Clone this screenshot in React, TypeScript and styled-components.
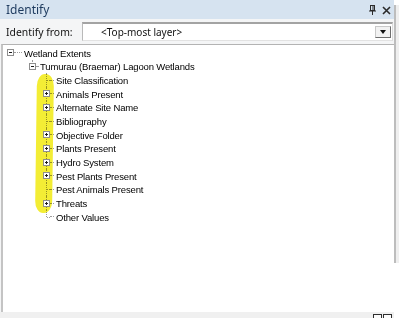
import styled, { createGlobalStyle } from "styled-components";

const GlobalStyle = createGlobalStyle`
  html, body {
    margin: 0;
    padding: 0;
  }
  body {
    width: 399px;
    height: 318px;
    overflow: hidden;
    background: #ffffff;
    font-family: "Noto Sans", "Liberation Sans", sans-serif;
  }
`;

type Child = { label: string; expandable: boolean };

const children: Child[] = [
  { label: "Site Classification", expandable: false },
  { label: "Animals Present", expandable: true },
  { label: "Alternate Site Name", expandable: true },
  { label: "Bibliography", expandable: false },
  { label: "Objective Folder", expandable: true },
  { label: "Plants Present", expandable: true },
  { label: "Hydro System", expandable: true },
  { label: "Pest Plants Present", expandable: true },
  { label: "Pest Animals Present", expandable: false },
  { label: "Threats", expandable: true },
  { label: "Other Values", expandable: false },
];

const App = () => {
  return (
    <>
      <GlobalStyle />
      <Frame>
        <Window>
          <TitleBar>
            <Title>Identify</Title>
            <TitleButtons>
              <svg width="7" height="10" viewBox="0 0 7 10">
                <rect x="1.5" y="0.5" width="4" height="5" fill="none" stroke="#2b2b2b" />
                <line x1="4" y1="1" x2="4" y2="5" stroke="#2b2b2b" />
                <line x1="0" y1="6" x2="7" y2="6" stroke="#2b2b2b" />
                <line x1="3.5" y1="6" x2="3.5" y2="10" stroke="#2b2b2b" />
              </svg>
              <svg width="9" height="9" viewBox="0 0 9 9">
                <path d="M1 1 L8 8 M8 1 L1 8" stroke="#2b2b2b" strokeWidth="1.6" />
              </svg>
            </TitleButtons>
          </TitleBar>
          <FromRow>
            <FromLabel>Identify from:</FromLabel>
            <Dropdown>
              <DropdownText>&lt;Top-most layer&gt;</DropdownText>
              <ArrowButton>
                <Arrow />
              </ArrowButton>
            </Dropdown>
          </FromRow>
          <TreePanel>
            <Row $indent={4}>
              <Node $up={false} $down={false}>
                <Box $open />
              </Node>
              <Dash $w={8} />
              <Label>Wetland Extents</Label>
            </Row>
            <Row $indent={26}>
              <Node $up $down={false}>
                <Box $open />
              </Node>
              <Dash $w={2} />
              <Label>Tumurau (Braemar) Lagoon Wetlands</Label>
            </Row>
            {children.map((c, i) => (
              <Row key={c.label} $indent={40}>
                <Node $up $down={i < children.length - 1}>
                  {c.expandable && <Box $open={false} />}
                </Node>
                <Dash $w={4} />
                <Label>{c.label}</Label>
              </Row>
            ))}
            <Marker />
          </TreePanel>
          <StatusStrip>
            <MiniButton />
            <MiniButton />
          </StatusStrip>
        </Window>
        <SideEdge>
          <SideBar />
        </SideEdge>
      </Frame>
    </>
  );
};

export default App;

const Frame = styled.div`
  display: flex;
  width: 399px;
  height: 318px;
`;

const Window = styled.div`
  flex: 1;
  min-width: 0;
  display: flex;
  flex-direction: column;
  background: #f4f5f6;
`;

const TitleBar = styled.div`
  height: 19px;
  flex: none;
  display: flex;
  align-items: center;
  justify-content: space-between;
  padding: 0 3px 0 6px;
  background: #d6e3f0;
`;

const Title = styled.div`
  font-size: 12px;
  color: #1d3a5e;
`;

const TitleButtons = styled.div`
  display: flex;
  align-items: center;
  gap: 6px;
  padding-top: 1px;
`;

const FromRow = styled.div`
  height: 25px;
  flex: none;
  display: flex;
  align-items: center;
  padding: 0 1px 0 6px;
`;

const FromLabel = styled.div`
  width: 76px;
  font-size: 10.4px;
  color: #111;
`;

const Dropdown = styled.div`
  flex: 1;
  height: 16px;
  display: flex;
  align-items: center;
  justify-content: space-between;
  background: #ffffff;
  border-top: 2px solid #a3a3a3;
  border-left: 1px solid #b9b9b9;
  border-right: 1px solid #dcdcdc;
  border-bottom: 1px solid #e2e2e2;
`;

const DropdownText = styled.div`
  padding-left: 18px;
  font-size: 10px;
  color: #111;
`;

const ArrowButton = styled.div`
  width: 14px;
  height: 10px;
  margin-right: 1px;
  display: flex;
  align-items: center;
  justify-content: center;
  background: #f2f2f2;
  border: 1px solid #c8c8c8;
  border-right-color: #6e6e6e;
  border-bottom-color: #6e6e6e;
`;

const Arrow = styled.div`
  width: 0;
  height: 0;
  border-left: 3.5px solid transparent;
  border-right: 3.5px solid transparent;
  border-top: 4px solid #111;
`;

const TreePanel = styled.div`
  position: relative;
  flex: 1;
  margin-left: 1px;
  padding-top: 1px;
  background: #ffffff;
  border-top: 1px solid #b3b3b3;
  border-left: 2px solid #c4c4c4;
  overflow: hidden;
`;

const Row = styled.div<{ $indent: number }>`
  height: 13.67px;
  display: flex;
  align-items: center;
  padding-left: ${(p) => p.$indent}px;
  white-space: nowrap;
`;

const Node = styled.span<{ $up: boolean; $down: boolean }>`
  position: relative;
  flex: none;
  width: 7px;
  height: 100%;
  display: flex;
  align-items: center;

  &::before {
    content: "";
    display: ${(p) => (p.$up || p.$down ? "block" : "none")};
    position: absolute;
    left: 3px;
    top: ${(p) => (p.$up ? "0" : "50%")};
    bottom: ${(p) => (p.$down ? "0" : "50%")};
    border-left: 1px dotted #9c9c9c;
  }

  &::after {
    content: "";
    position: absolute;
    left: 4px;
    right: 0;
    top: 50%;
    border-top: 1px dotted #9c9c9c;
  }
`;

const Box = styled.span<{ $open: boolean }>`
  position: relative;
  z-index: 1;
  box-sizing: border-box;
  width: 7px;
  height: 7px;
  background: #ffffff;
  border: 1px solid #8e8e8e;

  &::before {
    content: "";
    position: absolute;
    left: 1px;
    top: 2px;
    width: 3px;
    height: 1px;
    background: #1c1c1c;
  }

  &::after {
    content: "";
    display: ${(p) => (p.$open ? "none" : "block")};
    position: absolute;
    left: 2px;
    top: 1px;
    width: 1px;
    height: 3px;
    background: #1c1c1c;
  }
`;

const Dash = styled.span<{ $w: number }>`
  flex: none;
  width: ${(p) => p.$w}px;
  margin-right: 2px;
  border-top: 1px dotted #9c9c9c;
`;

const Label = styled.span`
  font-family: "Liberation Sans", Arial, sans-serif;
  font-size: 9.5px;
  letter-spacing: -0.15px;
  color: #000;
  line-height: 13px;
  padding-top: 1px;
`;

const Marker = styled.div`
  position: absolute;
  left: 33px;
  top: 29px;
  width: 17px;
  height: 139px;
  border-radius: 8px / 12px;
  background: #f3ec2a;
  mix-blend-mode: multiply;
  transform: rotate(0.8deg);
  opacity: 0.95;
`;

const StatusStrip = styled.div`
  height: 6px;
  flex: none;
  display: flex;
  justify-content: flex-end;
  gap: 1px;
  padding: 2px 2px 0 0;
  box-sizing: border-box;
  overflow: hidden;
  background: #f0f0f0;
`;

const MiniButton = styled.div`
  box-sizing: border-box;
  width: 9px;
  height: 9px;
  background: #fbfbfb;
  border: 1px solid #2e2e2e;
`;

const SideEdge = styled.div`
  flex: none;
  width: 5px;
  padding-top: 5px;
  background: #ffffff;
`;

const SideBar = styled.div`
  height: 258px;
  background: #efefef;
  border-left: 2px solid #bdbdbd;
`;
